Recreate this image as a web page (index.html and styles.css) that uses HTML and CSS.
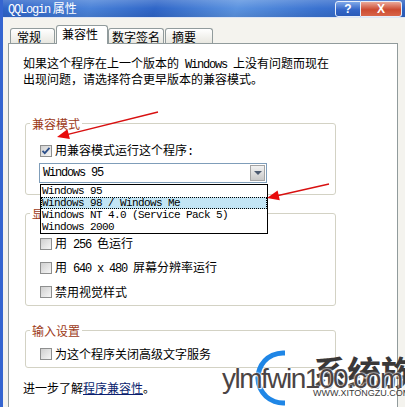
FILE: index.html
```html
<!DOCTYPE html>
<html lang="zh-CN">
<head>
    <meta charset="UTF-8">
    <meta name="viewport" content="width=device-width, initial-scale=1.0">
    <title>QQLogin 属性</title>
    <link rel="stylesheet" href="styles.css">
</head>
<body>

    <div class="window">
        <div class="titlebar">
            <span class="title"><span class="en">QQLogin</span> 属性</span>
            <div class="caption-btns">
                <button class="help">?</button>
                <button class="close">X</button>
            </div>
        </div>

        <div class="tabs">
            <div class="tab t1">常规</div>
            <div class="tab t2 active">兼容性</div>
            <div class="tab t3">数字签名</div>
            <div class="tab t4">摘要</div>
        </div>

        <div class="panel">
            <p class="intro">如果这个程序在上一个版本的<span class="en"> Windows </span>上没有问题而现在<br>出现问题，请选择符合更早版本的兼容模式。</p>

            <fieldset class="group g1">
                <legend>兼容模式</legend>
                <div class="check">
                    <span class="box checked">
                        <svg width="10" height="10" viewBox="0 0 10 10"><path d="M1.5 4.8 L3.8 7.2 L8.5 1.8" fill="none" stroke="#2b4f8a" stroke-width="1.8"/></svg>
                    </span>
                    <span>用兼容模式运行这个程序<span class="en">:</span></span>
                </div>
                <div class="combo">
                    <span class="combo-text en">Windows 95</span>
                    <span class="combo-btn"></span>
                    <ul class="combo-list">
                        <li>Windows 95</li>
                        <li class="selected">Windows 98 / Windows Me</li>
                        <li>Windows NT 4.0 (Service Pack 5)</li>
                        <li>Windows 2000</li>
                    </ul>
                </div>
            </fieldset>

            <fieldset class="group g2">
                <legend>显示设置</legend>
                <div class="check"><span class="box"></span><span>用<span class="en"> 256 </span>色运行</span></div>
                <div class="check"><span class="box"></span><span>用<span class="en"> 640 x 480 </span>屏幕分辨率运行</span></div>
                <div class="check"><span class="box"></span><span>禁用视觉样式</span></div>
            </fieldset>

            <fieldset class="group g3">
                <legend>输入设置</legend>
                <div class="check"><span class="box"></span><span>为这个程序关闭高级文字服务</span></div>
            </fieldset>

            <p class="more">进一步了解<a href="#">程序兼容性</a>。</p>
        </div>
    </div>

    <!-- red arrows drawn over the screenshot -->
    <svg class="arrows" width="405" height="407" viewBox="0 0 405 407">
        <line x1="158" y1="112" x2="66" y2="134.8" stroke="#d81010" stroke-width="1.3"/>
        <polygon points="57,137 69.9,139 67.4,129.3" fill="#e80c0c"/>
        <line x1="329" y1="184" x2="276" y2="196" stroke="#d81010" stroke-width="1.3"/>
        <polygon points="267,198 279.8,200.2 277.6,190.5" fill="#e80c0c"/>
    </svg>

    <div class="watermark">
        <svg class="ring" width="70" height="67" viewBox="0 0 70 67">
            <circle cx="68" cy="38" r="25" fill="none" stroke="#1f86e6" stroke-width="5" stroke-dasharray="120 40" transform="rotate(20 68 38)"/>
        </svg>
        <span class="wm-cn">系统族</span>
        <span class="wm-logo">ylmfwin100.com</span>
        <span class="wm-url">WWW.XITONGZU.COM</span>
    </div>

</body>
</html>
```

FILE: styles.css
```css
* {
    box-sizing: border-box;
}

body {
    margin: 0;
    width: 405px;
    height: 407px;
    overflow: hidden;
    position: relative;
    background: #f4f3ee;
    font-family: "Noto Sans CJK SC", sans-serif;
    font-size: 12px;
    line-height: 13px;
    color: #000;
}

/* ascii text of the old bitmap font */
.en {
    font-family: "Liberation Mono", monospace;
    font-size: 12px;
    letter-spacing: -1.2px;
}

.window {
    height: 407px;
    border-left: 3px solid #3565d0;
}

.titlebar {
    height: 18px;
    display: flex;
    align-items: center;
    justify-content: space-between;
    padding-left: 5px;
    color: #fff;
    background:
        linear-gradient(180deg, rgba(255, 255, 255, 0.18), rgba(0, 0, 0, 0) 50%, rgba(0, 0, 0, 0.08)),
        linear-gradient(110deg, #2d63c8 0%, #4a82d8 22%, #2f66c8 38%, #5b93e0 58%, #3a72d0 78%, #2d60c0 100%);
    border-bottom: 1px solid #dfe6f4;
}

.caption-btns {
    display: flex;
    margin-right: 3px;
}

.caption-btns button {
    height: 16px;
    padding: 0;
    border: 1px solid #e6eefa;
    color: #fff;
    font-family: "Liberation Sans", sans-serif;
    font-weight: bold;
    font-size: 12px;
    line-height: 14px;
}

.help {
    width: 26px;
    border-radius: 3px 0 0 3px;
    background: linear-gradient(#7fa8e8, #3466c8 55%, #2a5ab8);
}

.close {
    width: 41px;
    border-left: none !important;
    border-radius: 0 3px 3px 0;
    background: linear-gradient(#eaa898, #cc4a30 55%, #d8654a);
}

.tabs {
    height: 25px;
    display: flex;
    align-items: flex-end;
    padding-left: 7px;
}

.tab {
    height: 15px;
    padding: 1px 0 0 6px;
    border: 1px solid #919b9c;
    border-bottom: none;
    border-radius: 3px 3px 0 0;
    background: linear-gradient(#ffffff, #e8e7e0);
    white-space: nowrap;
}

.t1 { width: 45px; }
.t2 { width: 52px; padding-left: 5px; margin-left: 1px; }
.t3 { width: 56px; padding-left: 3px; }
.t4 { width: 48px; margin-left: 1px; }

.tab.active {
    height: 19px;
    margin-bottom: -1px;
    background: #fff;
    position: relative;
    z-index: 2;
}

.panel {
    width: 390px;
    height: 380px;
    margin-left: 5px;
    padding: 12px 0 0 14px;
    border: 1px solid #919b9c;
    background: #fff;
}

.intro {
    margin: 0;
}

.group {
    width: 311px;
    margin: 0 0 0 2px;
    padding: 0 0 0 14px;
    border: 1px solid #d3d2c4;
    border-radius: 3px;
}

.group legend {
    margin-left: -10px;
    padding: 0 2px;
    color: #9c3a18;
}

.g1 {
    margin-top: 32px;
    padding-top: 14px;
    padding-bottom: 11px;
}

.g2 {
    margin-top: 12px;
    padding-top: 17px;
    padding-bottom: 7px;
}

.g3 {
    margin-top: 18px;
    padding-top: 10px;
    padding-bottom: 7px;
}

.check {
    display: flex;
    align-items: center;
    gap: 3px;
    height: 13px;
}

.g2 .check + .check {
    margin-top: 11px;
}

.box {
    width: 12px;
    height: 12px;
    display: flex;
    align-items: center;
    justify-content: center;
    border: 1px solid #8e8f8f;
    background: linear-gradient(135deg, #cfcfcf, #f6f6f6);
}

.combo {
    position: relative;
    width: 228px;
    height: 20px;
    margin: 6px 0 0 -1px;
    display: flex;
    align-items: center;
    border: 1px solid #7f9db9;
    background: #fff;
}

.combo-text {
    padding-left: 3px;
}

.combo-btn {
    width: 15px;
    height: 16px;
    margin-left: auto;
    margin-right: 1px;
    display: flex;
    align-items: center;
    justify-content: center;
    border: 1px solid #a4a4a4;
    background: linear-gradient(#f2f2f2, #c9c9c9);
}

.combo-btn::after {
    content: "";
    border-left: 4px solid transparent;
    border-right: 4px solid transparent;
    border-top: 4px solid #4c5a70;
}

.combo-list {
    position: absolute;
    top: 20px;
    left: 0;
    width: 228px;
    margin: 0;
    padding: 0;
    list-style: none;
    border: 1px solid #000;
    background: #fff;
    font-family: "Liberation Mono", monospace;
    font-size: 11px;
    letter-spacing: -0.6px;
    z-index: 5;
}

.combo-list li {
    height: 12px;
    line-height: 12px;
    padding-left: 1px;
    white-space: pre;
}

.combo-list li.selected {
    background: #c3e5f5;
    outline: 1px dotted #000;
    outline-offset: -1px;
}

.more {
    margin: 13px 0 0 0;
}

.more a {
    color: #0a1e6e;
    text-decoration: underline;
}

.arrows {
    position: absolute;
    left: 0;
    top: 0;
    pointer-events: none;
    z-index: 10;
}

.watermark {
    position: absolute;
    left: 215px;
    top: 340px;
    width: 190px;
    height: 67px;
    overflow: hidden;
    pointer-events: none;
    z-index: 11;
}

.ring {
    position: absolute;
    left: 0;
    top: 0;
}

.wm-cn {
    position: absolute;
    left: 98px;
    top: 15px;
    font-size: 34px;
    line-height: 34px;
    font-weight: bold;
    color: #3a3838;
    white-space: nowrap;
}

.wm-logo {
    position: absolute;
    left: 7px;
    top: 25px;
    font-family: "Liberation Sans", sans-serif;
    font-size: 28px;
    line-height: 28px;
    letter-spacing: -1.5px;
    color: #4b4444;
    text-shadow: 0 0 2px #fff, 0 0 2px #fff, 1px 1px 1px #fff;
    white-space: nowrap;
}

.wm-url {
    position: absolute;
    left: 98px;
    top: 49px;
    font-family: "Liberation Sans", sans-serif;
    font-size: 9px;
    line-height: 9px;
    color: #3a3a3a;
    white-space: nowrap;
}
```
